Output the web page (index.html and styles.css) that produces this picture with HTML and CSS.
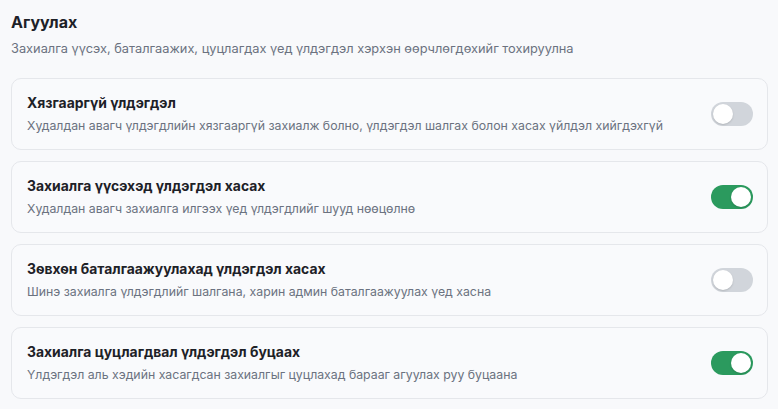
FILE: index.html
```html
<!DOCTYPE html>
<html lang="mn">
<head>
  <meta charset="UTF-8" />
  <meta name="viewport" content="width=device-width, initial-scale=1.0" />
  <title>Агуулах</title>
  <link rel="stylesheet" href="styles.css">
</head>
<body>
<div class="settings">
  <h2>Агуулах</h2>
  <p class="lead">Захиалга үүсэх, баталгаажих, цуцлагдах үед үлдэгдэл хэрхэн өөрчлөгдөхийг тохируулна</p>

  <div class="option">
    <div class="option-text">
      <h3>Хязгааргүй үлдэгдэл</h3>
      <p>Худалдан авагч үлдэгдлийн хязгааргүй захиалж болно, үлдэгдэл шалгах болон хасах үйлдэл хийгдэхгүй</p>
    </div>
    <span class="switch"></span>
  </div>

  <div class="option">
    <div class="option-text">
      <h3>Захиалга үүсэхэд үлдэгдэл хасах</h3>
      <p>Худалдан авагч захиалга илгээх үед үлдэгдлийг шууд нөөцөлнө</p>
    </div>
    <span class="switch on"></span>
  </div>

  <div class="option">
    <div class="option-text">
      <h3>Зөвхөн баталгаажуулахад үлдэгдэл хасах</h3>
      <p>Шинэ захиалга үлдэгдлийг шалгана, харин админ баталгаажуулах үед хасна</p>
    </div>
    <span class="switch"></span>
  </div>

  <div class="option">
    <div class="option-text">
      <h3>Захиалга цуцлагдвал үлдэгдэл буцаах</h3>
      <p>Үлдэгдэл аль хэдийн хасагдсан захиалгыг цуцлахад барааг агуулах руу буцаана</p>
    </div>
    <span class="switch on"></span>
  </div>
</div>
</body>
</html>
```

FILE: styles.css
```css
* {
  margin: 0;
  padding: 0;
  box-sizing: border-box;
  font-family: 'Inter', sans-serif;
}
body {
  background: #f8f9fb;
  color: #1f2328;
}
.settings {
  padding: 12px 10px 0 11px;
}
h2 {
  font-size: 16px;
  font-weight: 700;
  line-height: 20px;
  color: #1d2127;
}
.lead {
  margin-top: 8px;
  font-size: 12.8px;
  line-height: 18px;
  color: #6b7280;
  margin-bottom: 20px;
}
.option {
  display: flex;
  align-items: center;
  justify-content: space-between;
  height: 72px;
  padding: 0 14px 0 15px;
  margin-bottom: 11px;
  background: #f9fafc;
  border: 1px solid #e5e7eb;
  border-radius: 10px;
}
.option h3 {
  font-size: 13.9px;
  font-weight: 700;
  line-height: 18px;
  color: #1d2127;
}
.option p {
  margin-top: 5px;
  font-size: 12.3px;
  line-height: 17px;
  color: #6b7280;
}
.switch {
  position: relative;
  flex: none;
  width: 42px;
  height: 24px;
  border-radius: 12px;
  background: #d1d5db;
}
.switch::after {
  content: "";
  position: absolute;
  top: 2px;
  left: 2px;
  width: 20px;
  height: 20px;
  border-radius: 50%;
  background: #fff;
  box-shadow: 0 1px 2px rgba(0,0,0,0.15);
}
.switch.on {
  background: #2b9a5e;
}
.switch.on::after {
  left: 20px;
}
```
